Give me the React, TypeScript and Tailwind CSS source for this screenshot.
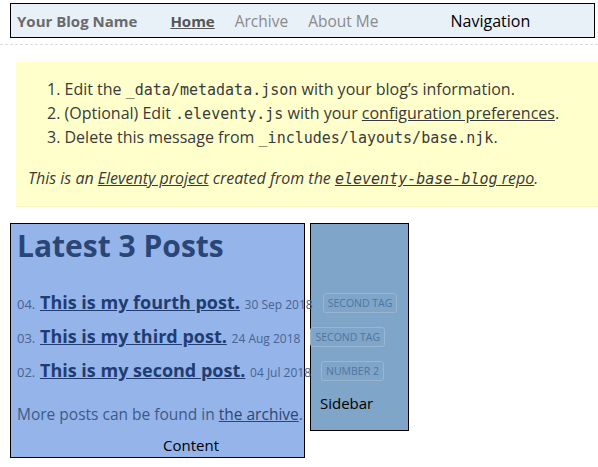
import React from "react";

const posts = [
  { n: "04.", title: "This is my fourth post.", date: "30 Sep 2018", tag: "Second tag" },
  { n: "03.", title: "This is my third post.", date: "24 Aug 2018", tag: "Second tag" },
  { n: "02.", title: "This is my second post.", date: "04 Jul 2018", tag: "Number 2" },
];

const mono = "font-['DejaVu_Sans_Mono',monospace] text-[15px] leading-[16px]";

export default function App() {
  return (
    <div className="font-['Open_Sans',sans-serif] bg-white w-[598px] h-[467px] overflow-hidden">
      <header className="pt-[3px] pb-[6px] border-b border-dashed border-[#dddddd]">
        <div className="ml-[10px] w-[585px] h-[35px] border border-black bg-[#e8f0f8] flex items-center">
          <a className="ml-[6px] text-[15px] leading-[20px] font-bold text-[#6a6a6a]">Your Blog Name</a>
          <nav className="flex items-center ml-[33px] gap-5">
            <a className="text-[15px] leading-[20px] font-bold text-[#555] underline">Home</a>
            <a className="text-[15.5px] leading-[20px] text-[#8a8a8a]">Archive</a>
            <a className="text-[15.5px] leading-[20px] text-[#8a8a8a]">About Me</a>
          </nav>
          <span className="ml-[72px] text-[16px] leading-[20px] text-black">Navigation</span>
        </div>
      </header>

      <div className="ml-4 mt-[17px] bg-[#ffffcc] text-[#3a3a3a] text-[16px] leading-[24px] pt-[15px] pb-[16px] pl-3 border-b border-dotted border-[#f0f0d8]">
        <ol className="pl-[19px]">
          <li>
            1. Edit the <code className={mono}>_data/metadata.json</code> with your blog’s information.
          </li>
          <li>
            2. (Optional) Edit <code className={mono}>.eleventy.js</code> with your{" "}
            <a className="underline">configuration preferences</a>.
          </li>
          <li>
            3. Delete this message from <code className={mono}>_includes/layouts/base.njk</code>.
          </li>
        </ol>
        <p className="italic mt-[17px]">
          This is an <a className="underline">Eleventy project</a> created from the{" "}
          <a className="underline">
            <code className={mono + " italic"}>eleventy-base-blog</code> repo
          </a>
          .
        </p>
      </div>

      <main className="flex items-start gap-[5px] ml-[10px] mt-4">
        <section className="relative z-10 w-[295px] h-[235px] border border-black bg-[#95b4e9] pl-[6px] pt-[4px] flex flex-col">
          <h1 className="text-[30px] leading-[36px] font-bold text-[#2a4676]">Latest 3 Posts</h1>
          <ol className="mt-[21px]">
            {posts.map((p) => (
              <li key={p.n} className="whitespace-nowrap text-[18px] leading-[34px] h-[34px]">
                <span className="text-[13px] leading-[1] text-[#48648f]">{p.n}</span>{" "}
                <a className="font-bold leading-[1] underline text-[#1f3d72]">{p.title}</a>{" "}
                <span className="text-[12px] leading-[1] text-[#48648f]">{p.date}</span>
                <span className="ml-[10px] inline-block align-[2px] border border-[#9ab6d3] rounded-[3px] px-[4px] text-[10.5px] leading-[18px] font-medium uppercase text-[#50759f]">
                  {p.tag}
                </span>
              </li>
            ))}
          </ol>
          <p className="mt-[15px] whitespace-nowrap text-[15.5px] leading-[24px] text-[#3e5a86]">
            More posts can be found in <a className="underline text-[#2c4775]">the archive</a>.
          </p>
          <div className="mt-auto pl-[146px] text-[15px] leading-[24px] text-black">Content</div>
        </section>
        <aside className="w-[99px] h-[208px] border border-black bg-[#7fa5c9] flex flex-col justify-end pl-[9px] pb-[15px]">
          <span className="text-[15px] leading-[24px] text-black">Sidebar</span>
        </aside>
      </main>
    </div>
  );
}
